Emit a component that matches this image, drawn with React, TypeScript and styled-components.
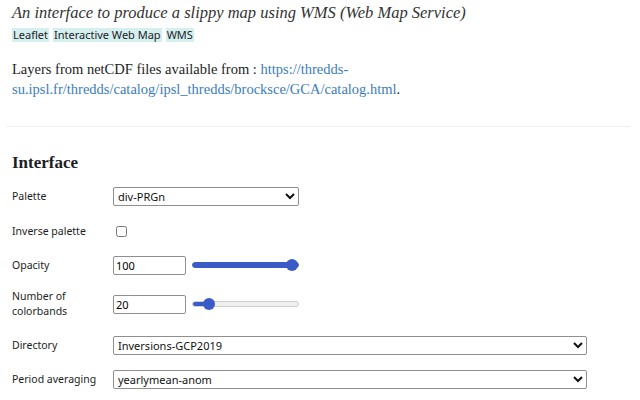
import React, { useState } from "react";
import styled, { createGlobalStyle } from "styled-components";

const Global = createGlobalStyle`
  html, body { margin: 0; padding: 0; background: #fff; }
  body { font-family: "Liberation Serif", serif; color: #1b1e23; }
`;

const Page = styled.div`
  width: 640px;
  height: 400px;
  overflow: hidden;
  padding: 0 0 0 12px;
  box-sizing: border-box;
`;

const Title = styled.h2`
  margin: 0;
  padding-top: 2px;
  font-family: "Liberation Serif", serif;
  font-style: italic;
  font-weight: 400;
  font-size: 16.5px;
  line-height: 21px;
  color: #333;
`;

const Tags = styled.div`
  display: flex;
  gap: 4px;
  margin-top: 5px;
`;

const Tag = styled.span`
  font-family: "Noto Sans", sans-serif;
  font-size: 11px;
  line-height: 14px;
  padding: 0 1px;
  background: #d5eef0;
  color: #1b1e23;
`;

const Para = styled.p`
  margin: 17px 0 0;
  font-size: 14.5px;
  line-height: 20px;
  width: 440px;
  color: #1b1e23;
`;

const Link = styled.a`
  color: #3b7dba;
  text-decoration: none;
`;

const Rule = styled.hr`
  margin: 27px 0 0 -5px;
  width: 623px;
  border: none;
  border-top: 1px solid #eee;
`;

const Heading = styled.h3`
  margin: 26px 0 0;
  font-size: 17px;
  font-weight: 700;
  line-height: 20px;
  color: #1b1e23;
`;

const Form = styled.div`
  display: flex;
  flex-direction: column;
  margin-top: 6px;
`;

const Row = styled.div<{ $h: number }>`
  display: flex;
  align-items: center;
  height: ${(p) => p.$h}px;
`;

const Label = styled.label`
  width: 101px;
  flex-shrink: 0;
  font-family: "Noto Sans", sans-serif;
  font-size: 10.5px;
  line-height: 15px;
  color: #1b1e23;
`;

const Select = styled.select<{ $w: number }>`
  width: ${(p) => p.$w}px;
  height: 19px;
  box-sizing: border-box;
  font-family: "Noto Sans", sans-serif;
  font-size: 11px;
  color: #111;
  border: 1px solid #8f8f8f;
  border-radius: 2px;
  background: #fff;
  padding: 0;
  margin: 0;
`;

const NumberBox = styled.input`
  width: 73px;
  height: 19px;
  box-sizing: border-box;
  font-family: "Noto Sans", sans-serif;
  font-size: 11px;
  border: 1px solid #8f8f8f;
  border-radius: 2px;
  padding: 0 2px;
  margin: 0;
`;

const Check = styled.input`
  margin: 0 0 0 3px;
  width: 11px;
  height: 11px;
`;

const Range = styled.input`
  -webkit-appearance: none;
  appearance: none;
  width: 107px;
  height: 6px;
  margin: 0 0 0 6px;
  border-radius: 3px;
  border: 1px solid #cfcfcf;
  box-sizing: border-box;
  outline: none;
  &::-webkit-slider-thumb {
    -webkit-appearance: none;
    width: 12px;
    height: 12px;
    border-radius: 50%;
    background: #3a5bc7;
    border: none;
  }
`;

function Slider({ value, min, max }: { value: number; min: number; max: number }) {
  const pct = ((value - min) / (max - min)) * 100;
  return (
    <Range
      type="range"
      min={min}
      max={max}
      defaultValue={value}
      style={{
        background: `linear-gradient(to right, #3a5bc7 0%, #3a5bc7 ${pct}%, #efefef ${pct}%, #efefef 100%)`,
        borderColor: pct >= 100 ? "#3a5bc7" : "#cfcfcf",
      }}
    />
  );
}

export default function App() {
  const [pal] = useState("div-PRGn");
  return (
    <Page>
      <Global />
      <Title>An interface to produce a slippy map using WMS (Web Map Service)</Title>
      <Tags>
        <Tag>Leaflet</Tag>
        <Tag>Interactive Web Map</Tag>
        <Tag>WMS</Tag>
      </Tags>
      <Para>
        Layers from netCDF files available from :{" "}
        <Link href="#">
          https://thredds-su.ipsl.fr/thredds/catalog/ipsl_thredds/brocksce/GCA/catalog.html
        </Link>
        .
      </Para>
      <Rule />
      <Heading>Interface</Heading>
      <Form>
        <Row $h={34}>
          <Label>Palette</Label>
          <Select $w={186} defaultValue={pal}>
            <option>div-PRGn</option>
          </Select>
        </Row>
        <Row $h={36}>
          <Label>Inverse palette</Label>
          <Check type="checkbox" />
        </Row>
        <Row $h={32}>
          <Label>Opacity</Label>
          <NumberBox type="text" defaultValue="100" />
          <Slider value={100} min={0} max={100} />
        </Row>
        <Row $h={46}>
          <Label>
            Number of
            <br />
            colorbands
          </Label>
          <NumberBox type="text" defaultValue="20" />
          <Slider value={20} min={10} max={100} />
        </Row>
        <Row $h={36}>
          <Label>Directory</Label>
          <Select $w={474} defaultValue="Inversions-GCP2019">
            <option>Inversions-GCP2019</option>
          </Select>
        </Row>
        <Row $h={32}>
          <Label>Period averaging</Label>
          <Select $w={474} defaultValue="yearlymean-anom">
            <option>yearlymean-anom</option>
          </Select>
        </Row>
      </Form>
    </Page>
  );
}
